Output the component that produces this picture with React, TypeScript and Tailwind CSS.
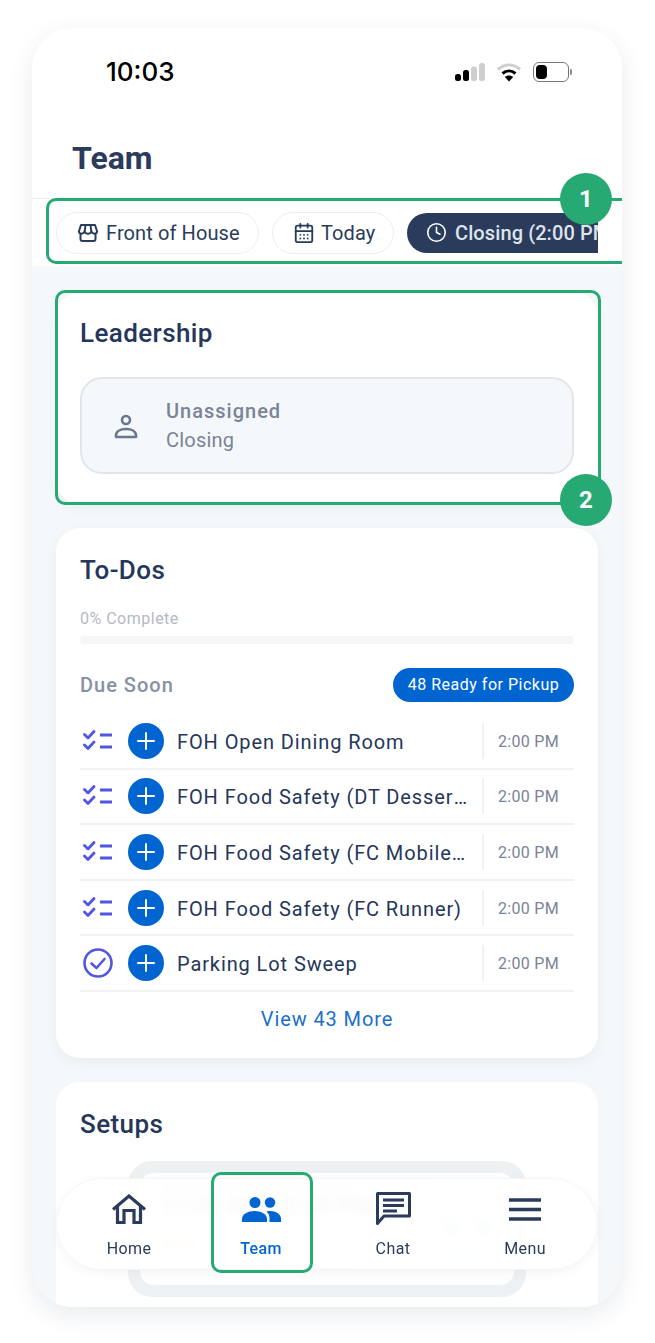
import { CalendarDays, Clock } from 'lucide-react'

const todos = [
  { name: 'FOH Open Dining Room', done: false },
  { name: 'FOH Food Safety (DT Dessert Station)', done: false },
  { name: 'FOH Food Safety (FC Mobile Ordering)', done: false },
  { name: 'FOH Food Safety (FC Runner)', done: false },
  { name: 'Parking Lot Sweep', done: true },
]

function StatusIcons() {
  return (
    <div className="flex items-center gap-[11px]">
      <svg width="30" height="20" viewBox="0 0 30 20">
        <rect x="0" y="12" width="6" height="7" rx="2.5" fill="#000" />
        <rect x="8" y="8" width="6" height="11" rx="2.5" fill="#000" />
        <rect x="16" y="4.5" width="6" height="14.5" rx="2.5" fill="#cfcfcf" />
        <rect x="24" y="1" width="6" height="18" rx="2.5" fill="#cfcfcf" />
      </svg>
      <svg width="26" height="20" viewBox="0 0 26 20" fill="none" strokeLinecap="butt">
        <path d="M2 7.5C8.5 1.5 17.5 1.5 24 7.5" stroke="#cfcfcf" strokeWidth="3.2" />
        <path d="M6.5 11.5C10.5 8 15.5 8 19.5 11.5" stroke="#000" strokeWidth="3" />
        <path d="M13 19.5L8.8 15C11.2 13 14.8 13 17.2 15Z" fill="#000" />
      </svg>
      <div className="flex items-center gap-[1px]">
        <div className="flex h-[20px] w-[36px] items-center rounded-[6px] border border-[#777] p-[2px]">
          <div className="h-[14px] w-[11px] rounded-[4px] bg-black" />
        </div>
        <div className="h-[6px] w-[2px] rounded-r-sm bg-[#888]" />
      </div>
    </div>
  )
}

function StoreIcon() {
  return (
    <svg width="20" height="18" viewBox="0 0 20 18" fill="none" stroke="#2a3b5c" strokeWidth="2" strokeLinejoin="round">
      <path d="M3 1h14l2 6c.2 1.700-1 2.800-2.500 2.800S14 8.800 13.300 7.500C12.800 8.800 11.500 9.800 10 9.800S7.200 8.800 6.700 7.500C6 8.800 5 9.800 3.500 9.800S.8 8.700 1 7Z" />
      <path d="M2.500 9.500V15a2 2 0 0 0 2 2h11a2 2 0 0 0 2-2V9.500" />
      <path d="M7.500 1 6.700 7.500M12.500 1l.8 6.500" />
    </svg>
  )
}

function PersonIcon() {
  return (
    <svg width="24" height="26" viewBox="0 0 24 26" fill="none" stroke="#6b7690" strokeWidth="2.600">
      <circle cx="12" cy="7" r="4" />
      <path d="M2 22.500c0-4 4-6.500 10-6.500s10 2.500 10 6.500V24H2Z" strokeLinejoin="round" />
    </svg>
  )
}

function ChecklistIcon() {
  return (
    <svg width="30" height="22" viewBox="0 0 30 22" fill="none" stroke="#5157e0" strokeWidth="2.800" strokeLinecap="round" strokeLinejoin="round">
      <path d="M1.500 4.500l3.500 3.500 6-6.500" />
      <path d="M1.500 15l3.500 3.500 6-6.500" />
      <path d="M17 5h12M17 17h12" strokeLinecap="butt" strokeWidth="3" />
    </svg>
  )
}

function CheckCircleIcon() {
  return (
    <svg width="30" height="30" viewBox="0 0 30 30" fill="none" stroke="#5157e0" strokeWidth="2.600" strokeLinecap="round" strokeLinejoin="round">
      <circle cx="15" cy="15" r="13.500" />
      <path d="M8.500 15.500l5 4.500 8-9" />
    </svg>
  )
}

function PlusButton() {
  return (
    <div className="flex h-9 w-9 shrink-0 items-center justify-center rounded-full bg-[#0065d1]">
      <svg width="20" height="20" viewBox="0 0 20 20" stroke="#fff" strokeWidth="2" strokeLinecap="round">
        <path d="M10 2v16M2 10h16" />
      </svg>
    </div>
  )
}

function HomeIcon() {
  return (
    <svg width="34" height="30" viewBox="0 0 34 30" fill="none" stroke="#2a3b5c" strokeWidth="3.200">
      <path d="M1 15.500 17 2l16 13.500" />
      <path d="M5.500 12v16.500H12V16.500h10v12h6.500V12" />
    </svg>
  )
}

function TeamIcon() {
  return (
    <svg width="39" height="25" viewBox="0 0 39 25" fill="#0065d1">
      <circle cx="13" cy="5.500" r="5.500" />
      <circle cx="28" cy="5.500" r="5.200" />
      <path d="M0 25v-3c0-5 6-8 12.500-8S25 17 25 22v3Z" />
      <path d="M27.500 25v-4c0-2.500-1-4.700-3-6.500 1.200-.4 2.500-.5 4-.5 5 0 10.500 3 10.500 7.500V25Z" />
    </svg>
  )
}

function ChatIcon() {
  return (
    <svg width="35" height="35" viewBox="0 0 35 35" fill="none">
      <path d="M1.500 1.500h32V24H8l-6.500 7.500Z" stroke="#2a3b5c" strokeWidth="3" strokeLinejoin="round" />
      <path d="M7 8h21M7 13.500h21M7 19h14" stroke="#2a3b5c" strokeWidth="3" />
    </svg>
  )
}

function MenuIcon() {
  return (
    <svg width="32" height="23" viewBox="0 0 32 23" stroke="#2a3b5c" strokeWidth="3.400">
      <path d="M0 2h32M0 11.500h32M0 21h32" />
    </svg>
  )
}

function Filters() {
  return (
    <div className="flex h-[68px] items-center gap-[13px] border-t border-[#eef1f3] bg-white pl-[24px]">
      <div className="flex h-[42px] w-[203px] shrink-0 items-center gap-[8px] rounded-full border border-[#eceef1] pl-[21px]">
        <StoreIcon />
        <span className="text-[20px] tracking-[0.1px] text-[#2a3b5c]">Front of House</span>
      </div>
      <div className="flex h-[42px] w-[122px] shrink-0 items-center gap-[6px] rounded-full border border-[#eceef1] pl-[20px]">
        <CalendarDays size={22} color="#2a3b5c" strokeWidth={2} />
        <span className="text-[20px] tracking-[0.1px] text-[#2a3b5c]">Today</span>
      </div>
      <div className="flex h-[40px] w-[191px] shrink-0 items-center gap-[8px] overflow-hidden rounded-l-full bg-[#2a3b5c] pl-[19px]">
        <Clock size={21} color="#fff" strokeWidth={1.8} className="shrink-0" />
        <span className="whitespace-nowrap text-[20px] font-medium tracking-[0.1px] text-[#dfe3ea]">Closing (2:00 PM)</span>
      </div>
    </div>
  )
}

function Leadership() {
  return (
    <section className="h-[212px] rounded-[24px] bg-white px-[24px] pt-[24px] shadow-[0_4px_12px_rgba(40,60,90,0.06)]">
      <h2 className="text-[26px] leading-[34px] font-medium tracking-[0.4px] text-[#25365a]">Leadership</h2>
      <div className="mt-[27px] flex h-[97px] items-center gap-[28px] rounded-[22px] border-2 border-[#e2e5ea] bg-[#f5f8fa] pl-[32px]">
        <PersonIcon />
        <div>
          <div className="text-[20px] leading-[28px] font-medium tracking-[1px] text-[#7a8398]">Unassigned</div>
          <div className="mt-[1px] text-[20px] leading-[28px] tracking-[0.2px] text-[#7a8398]">Closing</div>
        </div>
      </div>
    </section>
  )
}

function Todos() {
  return (
    <section className="mt-[24px] h-[530px] rounded-[24px] bg-white px-[24px] pt-[24px] shadow-[0_4px_12px_rgba(40,60,90,0.06)]">
      <h2 className="text-[26px] leading-[36px] font-medium tracking-[0.4px] text-[#25365a]">To-Dos</h2>
      <div className="mt-[24px] text-[16px] leading-[14px] tracking-[0.5px] text-[#b4b9c4]">0% Complete</div>
      <div className="mt-[10px] h-[8px] rounded-full bg-[#f4f6f8]" />
      <div className="mt-[24px] flex h-[34px] items-center justify-between">
        <span className="text-[20px] font-medium tracking-[1px] text-[#8790a5]">Due Soon</span>
        <span className="flex h-[34px] w-[181px] items-center justify-center rounded-full bg-[#0065d1] text-[16px] tracking-[0.5px] text-white">
          48 Ready for Pickup
        </span>
      </div>
      <div className="mt-[12px]">
        {todos.map((todo) => (
          <div key={todo.name} className="flex h-[55.6px] items-center border-b-2 border-[#f0f2f4]">
            <div className="flex w-[48px] shrink-0 items-center pl-[3px]">
              {todo.done ? <CheckCircleIcon /> : <ChecklistIcon />}
            </div>
            <PlusButton />
            <span className="mr-[12px] ml-[13px] w-[293px] truncate pt-[2px] text-[20px] tracking-[0.9px] text-[#25365a]">{todo.name}</span>
            <div className="flex h-[36px] flex-1 items-center justify-end border-l-2 border-[#f0f2f4] pt-[2px] pr-[15px]">
              <span className="text-[16px] tracking-[0.3px] text-[#7a8398]">2:00 PM</span>
            </div>
          </div>
        ))}
      </div>
      <div className="mt-[12px] text-center text-[20px] tracking-[0.9px] text-[#1a6fc9]">View 43 More</div>
    </section>
  )
}

function Setups() {
  return (
    <section className="mt-[24px] h-[300px] rounded-t-[24px] bg-white px-[24px] pt-[24px]">
      <h2 className="text-[26px] leading-[36px] font-medium tracking-[0.4px] text-[#25365a]">Setups</h2>
      <div className="mx-auto mt-[19px] w-[398px] rounded-[24px] bg-[#eef1f3] p-[12px]">
        <div className="flex h-[112px] justify-between overflow-hidden rounded-[14px] bg-white pr-[14px] pl-[20px]">
          <div className="w-[192px] pt-[14px]">
            <div className="h-[2px] bg-[#d9c2b0]" />
            <div className="mt-[3px] text-[24px] leading-[28px] font-medium whitespace-nowrap text-[#9aa3b3]">11:00 AM - 2:00 PM</div>
            <div className="mt-[14px] text-[14px] leading-[20px] text-[#e6cf9a]">Count</div>
            <div className="mt-[13px] h-[2px] bg-[#cfd4ea]" />
          </div>
          <div className="flex w-[65px] flex-col items-center pt-[8px]">
            <div className="h-[2px] w-full bg-[#c9d6ea]" />
            <div className="mt-[34px] flex gap-[14px]">
              <div className="h-[20px] w-[16px] rounded-full bg-[#dbe6f5]" />
              <div className="h-[20px] w-[20px] rounded-full bg-[#dbe6f5]" />
            </div>
            <div className="mt-[24px] h-[2px] w-full bg-[#c9d6ea]" />
          </div>
        </div>
      </div>
    </section>
  )
}

function NavItem({ label, active, children }: { label: string; active?: boolean; children: React.ReactNode }) {
  return (
    <div className="flex flex-col items-center justify-end pb-[8px]">
      <div className="flex h-[42px] items-center">{children}</div>
      <span className={active ? 'mt-[7px] text-[16px] leading-[24px] font-medium tracking-[0.4px] text-[#0065d1]' : 'mt-[7px] text-[16px] leading-[24px] tracking-[0.4px] text-[#2a3b5c]'}>
        {label}
      </span>
    </div>
  )
}

function BottomNav() {
  return (
    <nav className="absolute top-[1150px] left-[24px] grid h-[92px] w-[542px] grid-cols-4 rounded-[46px] border border-[#f4f5f7] bg-white/90 px-[6px] shadow-[0_3px_10px_rgba(40,60,90,0.05)] backdrop-blur-[4px]">
      <NavItem label="Home"><HomeIcon /></NavItem>
      <NavItem label="Team" active><TeamIcon /></NavItem>
      <NavItem label="Chat"><ChatIcon /></NavItem>
      <NavItem label="Menu"><MenuIcon /></NavItem>
    </nav>
  )
}

function Callout({ n, className }: { n: number; className: string }) {
  return (
    <div className={`absolute flex h-[52px] w-[52px] items-center justify-center rounded-full bg-[#27a974] text-[24px] font-bold text-white ${className}`}>
      {n}
    </div>
  )
}

export default function App() {
  return (
    <div className="h-[1343px] w-[655px] bg-white pt-[28px] pl-[32px] font-['Roboto',sans-serif]">
      <div className="relative h-[1279px] w-[590px] overflow-hidden rounded-[40px] bg-[#f5f8fa] shadow-[0_8px_24px_rgba(40,60,90,0.10)]">
        <header className="h-[170px] bg-white">
          <div className="flex items-center justify-between pt-[28px] pr-[50px] pl-[74px]">
            <span className="font-['Inter',sans-serif] text-[26px] leading-[32px] font-medium text-black">10:03</span>
            <StatusIcons />
          </div>
          <h1 className="mt-[50px] pl-[40px] text-[32px] leading-[40px] font-bold text-[#2a3b5c]">Team</h1>
        </header>
        <Filters />
        <div className="px-[24px] pt-[26px]">
          <Leadership />
          <Todos />
          <Setups />
        </div>
        <BottomNav />

        {/* Callouts over the screenshot */}
        <div className="absolute top-[170px] left-[14px] h-[66px] w-[600px] rounded-l-[10px] border-[3px] border-[#27a974]" />
        <Callout n={1} className="top-[145px] left-[528px]" />
        <div className="absolute top-[262px] left-[23px] h-[215px] w-[546px] rounded-[10px] border-[3px] border-[#27a974]" />
        <Callout n={2} className="top-[446px] left-[528px]" />
        <div className="absolute top-[1144px] left-[179px] h-[101px] w-[102px] rounded-[10px] border-[3px] border-[#27a974]" />
      </div>
    </div>
  )
}
